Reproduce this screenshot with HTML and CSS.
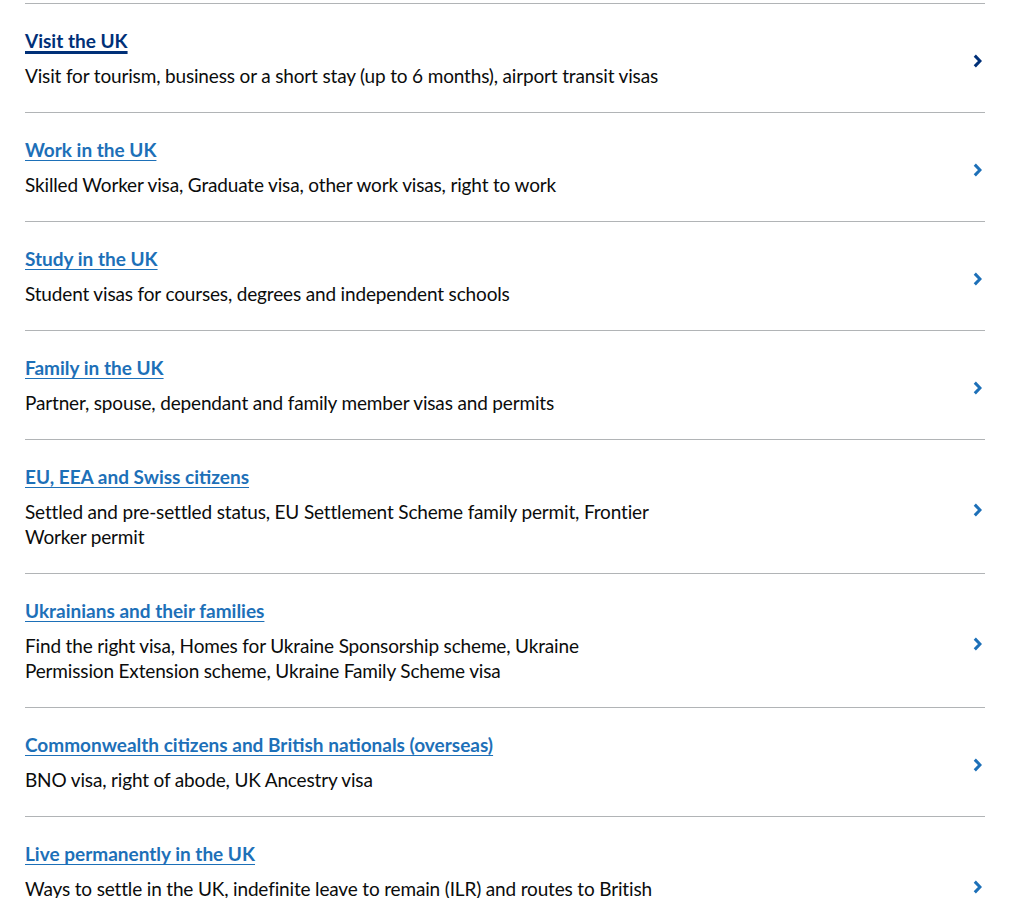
FILE: index.html
```html
<!DOCTYPE html>
<html lang="en">
<head>
<meta charset="utf-8">
<title>Visas and immigration</title>
<link rel="stylesheet" href="styles.css">
</head>
<body>
<main class="page">
  <ul class="browse-list">
    <li class="browse-item">
      <div class="browse-text">
        <a class="browse-link is-hover" href="#">Visit the UK</a>
        <p class="browse-desc">Visit for tourism, business or a short stay (up to 6 months), airport transit visas</p>
      </div>
      <svg class="chevron is-hover" viewBox="0 0 9 14" width="9" height="14" aria-hidden="true"><path d="M1.8 1.6 L7 7 L1.8 12.4" fill="none" stroke="currentColor" stroke-width="3"/></svg>
    </li>
    <li class="browse-item">
      <div class="browse-text">
        <a class="browse-link" href="#">Work in the UK</a>
        <p class="browse-desc">Skilled Worker visa, Graduate visa, other work visas, right to work</p>
      </div>
      <svg class="chevron" viewBox="0 0 9 14" width="9" height="14" aria-hidden="true"><path d="M1.8 1.6 L7 7 L1.8 12.4" fill="none" stroke="currentColor" stroke-width="3"/></svg>
    </li>
    <li class="browse-item">
      <div class="browse-text">
        <a class="browse-link" href="#">Study in the UK</a>
        <p class="browse-desc">Student visas for courses, degrees and independent schools</p>
      </div>
      <svg class="chevron" viewBox="0 0 9 14" width="9" height="14" aria-hidden="true"><path d="M1.8 1.6 L7 7 L1.8 12.4" fill="none" stroke="currentColor" stroke-width="3"/></svg>
    </li>
    <li class="browse-item">
      <div class="browse-text">
        <a class="browse-link" href="#">Family in the UK</a>
        <p class="browse-desc">Partner, spouse, dependant and family member visas and permits</p>
      </div>
      <svg class="chevron" viewBox="0 0 9 14" width="9" height="14" aria-hidden="true"><path d="M1.8 1.6 L7 7 L1.8 12.4" fill="none" stroke="currentColor" stroke-width="3"/></svg>
    </li>
    <li class="browse-item">
      <div class="browse-text">
        <a class="browse-link" href="#">EU, EEA and Swiss citizens</a>
        <p class="browse-desc">Settled and pre-settled status, EU Settlement Scheme family permit, Frontier Worker permit</p>
      </div>
      <svg class="chevron" viewBox="0 0 9 14" width="9" height="14" aria-hidden="true"><path d="M1.8 1.6 L7 7 L1.8 12.4" fill="none" stroke="currentColor" stroke-width="3"/></svg>
    </li>
    <li class="browse-item">
      <div class="browse-text">
        <a class="browse-link" href="#">Ukrainians and their families</a>
        <p class="browse-desc">Find the right visa, Homes for Ukraine Sponsorship scheme, Ukraine Permission Extension scheme, Ukraine Family Scheme visa</p>
      </div>
      <svg class="chevron" viewBox="0 0 9 14" width="9" height="14" aria-hidden="true"><path d="M1.8 1.6 L7 7 L1.8 12.4" fill="none" stroke="currentColor" stroke-width="3"/></svg>
    </li>
    <li class="browse-item">
      <div class="browse-text">
        <a class="browse-link" href="#">Commonwealth citizens and British nationals (overseas)</a>
        <p class="browse-desc">BNO visa, right of abode, UK Ancestry visa</p>
      </div>
      <svg class="chevron" viewBox="0 0 9 14" width="9" height="14" aria-hidden="true"><path d="M1.8 1.6 L7 7 L1.8 12.4" fill="none" stroke="currentColor" stroke-width="3"/></svg>
    </li>
    <li class="browse-item">
      <div class="browse-text">
        <a class="browse-link" href="#">Live permanently in the UK</a>
        <p class="browse-desc">Ways to settle in the UK, indefinite leave to remain (ILR) and routes to British citizenship</p>
      </div>
      <svg class="chevron" viewBox="0 0 9 14" width="9" height="14" aria-hidden="true"><path d="M1.8 1.6 L7 7 L1.8 12.4" fill="none" stroke="currentColor" stroke-width="3"/></svg>
    </li>
  </ul>
</main>
</body>
</html>
```
FILE: styles.css
```css
html, body {
  margin: 0;
  padding: 0;
  background: #ffffff;
}

body {
  font-family: Lato, "Liberation Sans", Arial, sans-serif;
  color: #0b0c0c;
  -webkit-font-smoothing: antialiased;
}

.page {
  padding: 3px 0 0 25px;
}

.browse-list {
  list-style: none;
  margin: 0;
  padding: 0;
  width: 960px;
}

.browse-item {
  display: flex;
  align-items: center;
  justify-content: space-between;
  border-top: 1px solid #b1b4b6;
  padding: 24px 0 24px;
}

.browse-text {
  display: flex;
  flex-direction: column;
  align-items: flex-start;
  max-width: 640px;
}

.browse-link {
  font-size: 19px;
  line-height: 25px;
  font-weight: 700;
  letter-spacing: 0;
  color: #1d70b8;
  text-decoration: underline;
  text-decoration-thickness: 1px;
  text-underline-offset: 3px;
}

.browse-link.is-hover {
  color: #003078;
  text-decoration-thickness: 3px;
}

.browse-desc {
  margin: 10px 0 0;
  font-size: 19px;
  line-height: 25px;
  letter-spacing: -0.16px;
}

.chevron {
  flex: none;
  color: #1d70b8;
  margin-right: 3px;
  margin-top: 6px;
}

.chevron.is-hover {
  color: #003078;
}
```
